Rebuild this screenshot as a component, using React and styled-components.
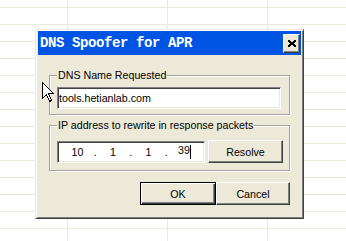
import React from "react";
import styled, { createGlobalStyle } from "styled-components";

const GlobalStyle = createGlobalStyle`
  html, body { margin: 0; padding: 0; }
  body {
    width: 346px;
    height: 241px;
    overflow: hidden;
    background-color: #ffffff;
    background-image:
      linear-gradient(to right, #ebe8dd 1px, transparent 1px),
      linear-gradient(to bottom, #ebe8dd 1px, transparent 1px);
    background-size: 100px 100%, 100% 17px;
    background-position: 67px 0, 0 7px;
    font-family: "Liberation Sans", Arial, sans-serif;
  }
`;

const Desktop = styled.div`
  position: relative;
  width: 346px;
  height: 241px;
  box-sizing: border-box;
  padding: 29px 0 0 35px;
`;

const Dialog = styled.div`
  width: 269px;
  height: 190px;
  box-sizing: border-box;
  background: #ece9d8;
  border: 1px solid;
  border-color: #ece9d8 #404040 #404040 #ece9d8;
  box-shadow: inset 1px 1px #ffffff, inset -1px -1px #808080;
  padding: 1px 2px 2px 2px;
  display: flex;
  flex-direction: column;
`;

const TitleBar = styled.div`
  height: 24px;
  background: #0054e3;
  display: flex;
  align-items: center;
  justify-content: space-between;
  padding: 0 1px 0 2px;
`;

const TitleText = styled.span`
  font-family: "Liberation Mono", "Courier New", monospace;
  font-weight: bold;
  font-size: 14px;
  letter-spacing: -0.4px;
  line-height: 1;
  color: #ffffff;
  white-space: pre;
`;

const CloseButton = styled.button`
  width: 17px;
  height: 19px;
  box-sizing: border-box;
  padding: 0;
  margin: 0;
  background: #ece9d8;
  border: 1px solid;
  border-color: #ffffff #404040 #404040 #ffffff;
  box-shadow: inset -1px -1px #808080;
  display: flex;
  align-items: center;
  justify-content: center;
`;

const Body = styled.div`
  display: flex;
  flex-direction: column;
  padding: 14px 11px 0 11px;
`;

const Group = styled.fieldset`
  margin: ${(p) => p.$mt || 0}px 0 0 0;
  min-width: 0;
  border: 1px solid #a6a49a;
  box-shadow: inset 1px 1px #ffffff, 1px 1px 0 #ffffff;
  padding: ${(p) => p.$pt}px ${(p) => p.$pr}px ${(p) => p.$pb}px 7px;
`;

const Legend = styled.legend`
  padding: 0 1px;
  margin: 0;
  font-size: 10.67px;
  line-height: 13px;
  color: #000;
  background: #ece9d8;
`;

const TextBox = styled.input`
  display: block;
  width: 224px;
  height: 22px;
  box-sizing: border-box;
  margin: 0;
  padding: 0 1px;
  border: 1px solid;
  border-color: #808080 #ffffff #ffffff #808080;
  box-shadow: inset 1px 1px #404040, inset -1px -1px #ece9d8;
  background: #ffffff;
  font-family: "Liberation Sans", Arial, sans-serif;
  font-size: 10.67px;
  color: #000;
  outline: none;
`;

const IpRow = styled.div`
  display: flex;
  align-items: center;
  gap: 3px;
`;

const IpBox = styled.div`
  width: 148px;
  height: 22px;
  box-sizing: border-box;
  border: 1px solid;
  border-color: #808080 #ffffff #ffffff #808080;
  box-shadow: inset 1px 1px #404040, inset -1px -1px #ece9d8;
  background: #ffffff;
  padding-left: 4.5px;
  display: grid;
  grid-template-columns: 30px 5.5px 30px 5.5px 30px 5.5px 30px;
  align-items: center;
  font-size: 10.67px;
  color: #000;
`;

const IpPart = styled.span`
  text-align: center;
  white-space: nowrap;
`;

const Caret = styled.span`
  display: inline-block;
  width: 1px;
  height: 14px;
  background: #000;
  vertical-align: middle;
  margin-right: -1px;
`;

const Button = styled.button`
  width: ${(p) => p.$w}px;
  height: 23px;
  box-sizing: border-box;
  margin: 0;
  padding: 0;
  background: #ece9d8;
  font-family: "Liberation Sans", Arial, sans-serif;
  font-size: 10.67px;
  color: #000;
  border: 1px solid;
  border-color: ${(p) =>
    p.$default ? "#000000" : "#ffffff #404040 #404040 #ffffff"};
  box-shadow: ${(p) =>
    p.$default
      ? "inset 1px 1px #ffffff, inset -1px -1px #404040, inset -2px -2px #808080"
      : "inset -1px -1px #808080"};
`;

const ButtonRow = styled.div`
  display: flex;
  justify-content: flex-end;
  margin-top: 11px;
`;

const CursorIcon = styled.svg`
  position: absolute;
  left: 42px;
  top: 82px;
`;

const X_ROWS = [
  "XX....XX",
  "XXX..XXX",
  ".XXXXXX.",
  "..XXXX..",
  ".XXXXXX.",
  "XXX..XXX",
  "XX....XX",
];

function CloseGlyph() {
  const rects = [];
  X_ROWS.forEach((row, y) => {
    row.split("").forEach((c, x) => {
      if (c === "X") rects.push(<rect key={`${x}-${y}`} x={x} y={y} width="1" height="1" />);
    });
  });
  return (
    <svg width="8" height="7" viewBox="0 0 8 7" shapeRendering="crispEdges" fill="#000">
      {rects}
    </svg>
  );
}

export default function App() {
  return (
    <>
      <GlobalStyle />
      <Desktop>
        <Dialog>
          <TitleBar>
            <TitleText>DNS Spoofer for APR</TitleText>
            <CloseButton aria-label="Close">
              <CloseGlyph />
            </CloseButton>
          </TitleBar>
          <Body>
            <Group $pt={5} $pr={8} $pb={5}>
              <Legend>DNS Name Requested</Legend>
              <TextBox readOnly defaultValue="tools.hetianlab.com" />
            </Group>
            <Group $mt={4} $pt={8} $pr={6} $pb={7}>
              <Legend>IP address to rewrite in response packets</Legend>
              <IpRow>
                <IpBox>
                  <IpPart>10</IpPart>
                  <IpPart>.</IpPart>
                  <IpPart>1</IpPart>
                  <IpPart>.</IpPart>
                  <IpPart>1</IpPart>
                  <IpPart>.</IpPart>
                  <IpPart>
                    39
                    <Caret />
                  </IpPart>
                </IpBox>
                <Button $w={75}>Resolve</Button>
              </IpRow>
            </Group>
            <ButtonRow>
              <Button $w={76} $default>OK</Button>
              <Button $w={74}>Cancel</Button>
            </ButtonRow>
          </Body>
        </Dialog>
        <CursorIcon width="12" height="21" viewBox="0 0 12 21" shapeRendering="crispEdges">
          <path
            d="M0.5 0.5 L0.5 16.5 L4.5 12.5 L7.5 19.5 L9.5 18.5 L6.5 11.5 L11.5 11.5 Z"
            fill="#ffffff"
            stroke="#000000"
            strokeWidth="1"
            strokeLinejoin="miter"
          />
        </CursorIcon>
      </Desktop>
    </>
  );
}
